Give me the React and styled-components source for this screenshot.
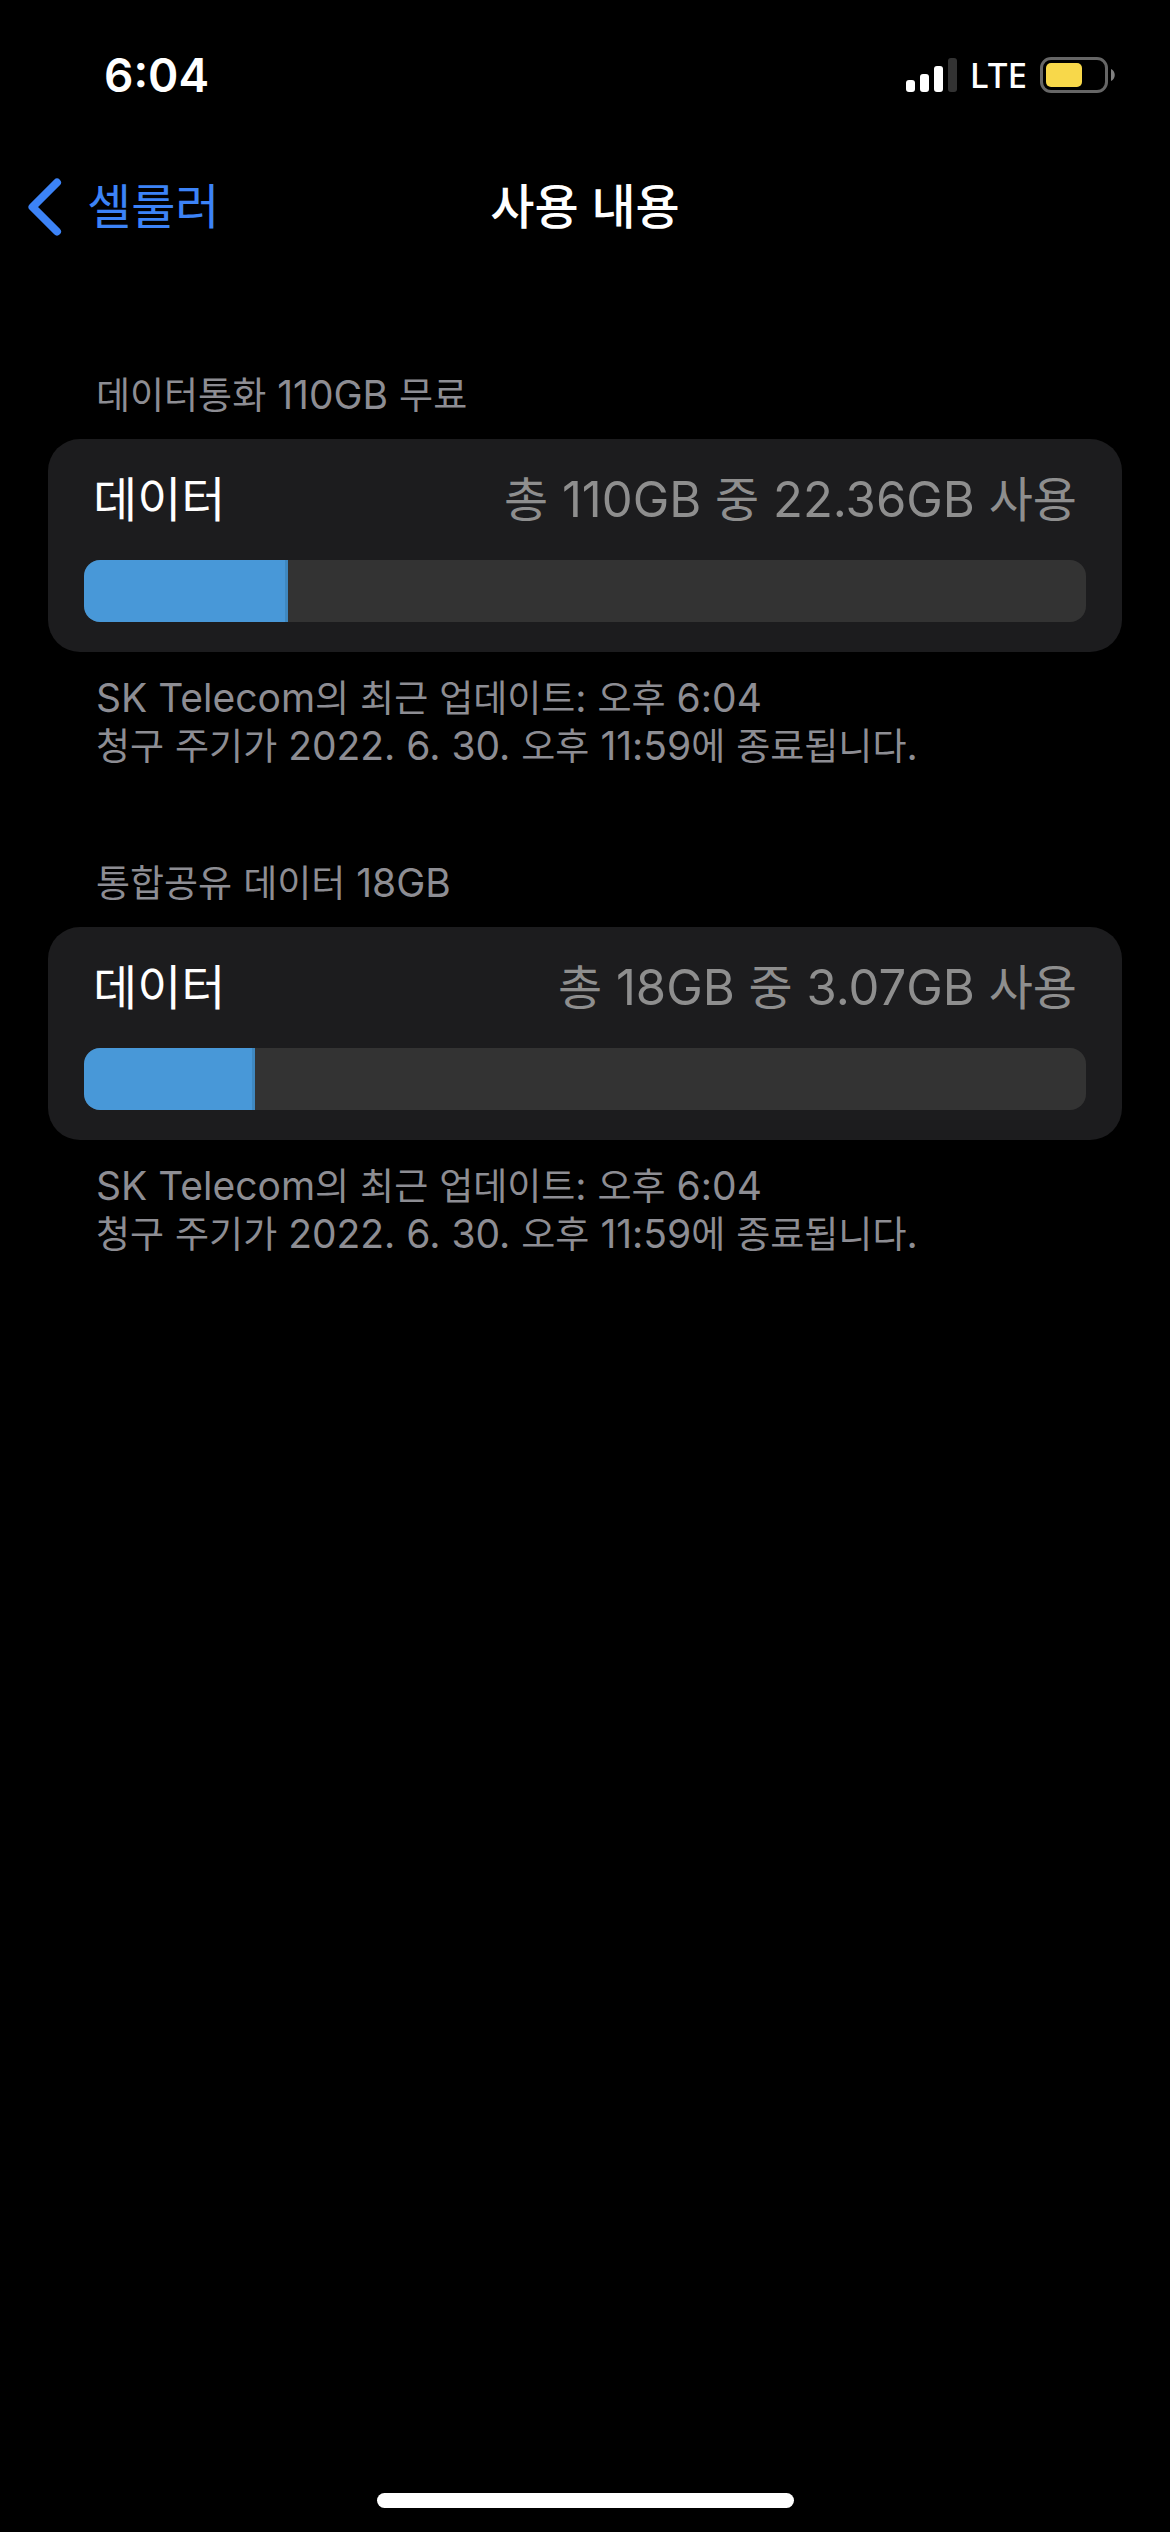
import React from "react";
import styled, { createGlobalStyle } from "styled-components";

const GlobalStyle = createGlobalStyle`
  *, *::before, *::after { box-sizing: border-box; }
  body {
    margin: 0;
    background: #000;
    color: #fff;
    font-family: Inter, "Noto Sans CJK KR", sans-serif;
  }
  h1, h2, h3, p { margin: 0; font-weight: 400; }
`;

const Screen = styled.div`
  display: flex;
  flex-direction: column;
  min-height: 100vh;
`;

const StatusBar = styled.header`
  display: flex;
  align-items: center;
  justify-content: space-between;
  height: 141px;
  padding: 8px 54px 0 104px;
`;

const Clock = styled.time`
  font-size: 46px;
  line-height: 48px;
  font-weight: 600;
`;

const StatusIcons = styled.div`
  display: flex;
  align-items: center;
  gap: 13px;
`;

const Network = styled.span`
  font-family: "Noto Sans", sans-serif;
  font-size: 35px;
  line-height: 48px;
  font-weight: 500;
`;

const NavBar = styled.nav`
  display: grid;
  grid-template-columns: 1fr auto 1fr;
  align-items: center;
  height: 132px;
  padding: 0 28px;
`;

const BackButton = styled.button`
  display: flex;
  align-items: center;
  gap: 25px;
  justify-self: start;
  padding: 0;
  border: 0;
  background: none;
  color: #3c83f7;
  font: inherit;
  font-size: 48px;
  line-height: 62px;
  cursor: pointer;
`;

const Title = styled.h1`
  font-size: 48px;
  line-height: 62px;
  font-weight: 500;
`;

const Content = styled.main`
  display: flex;
  flex-direction: column;
  flex: 1;
  gap: 89px;
  padding: 99px 48px 0;
`;

/* Latin letters and digits are set a little larger than the Hangul beside them. */
const Latin = styled.span`
  line-height: 1;
`;

const Caption = styled.h2`
  padding: 0 48px 19px;
  color: #8d8d93;
  font-size: 37px;
  line-height: 48px;

  ${Latin} {
    font-size: 39px;
  }
`;

const Card = styled.div`
  padding: 30px 36px;
  border-radius: 32px;
  background: #1c1c1e;
`;

const Row = styled.div`
  display: flex;
  justify-content: space-between;
  padding: 0 9px 29px;
  font-size: 48px;
  line-height: 62px;

  ${Latin} {
    font-size: 49px;
  }
`;

const Amount = styled.span`
  color: #8e8e8e;
`;

const Track = styled.div`
  height: 62px;
  border-radius: 16px;
  overflow: hidden;
  background: #333;
`;

const Fill = styled.div`
  height: 100%;
  border-right: 3px solid #3f88c0;
  background: #4898d8;
`;

const Footnote = styled.div`
  padding: 23px 48px 0;
  color: #8d8d93;
  font-size: 37px;
  line-height: 48px;

  ${Latin} {
    font-size: 39px;
  }
`;

const HomeArea = styled.footer`
  display: flex;
  justify-content: center;
  padding-bottom: 24px;
`;

const HomeIndicator = styled.div`
  width: 417px;
  height: 15px;
  border-radius: 8px;
  background: #fff;
`;

const plans = [
  { name: "데이터통화 110GB 무료", total: 110, used: 22.36 },
  { name: "통합공유 데이터 18GB", total: 18, used: 3.07 },
];

function MixedText({ children }) {
  return children
    .split(/([\x20-\x7e]+)/)
    .filter(Boolean)
    .map((run, i) => (/^[\x20-\x7e]/.test(run) ? <Latin key={i}>{run}</Latin> : run));
}

function SignalIcon() {
  return (
    <svg width="51" height="34" viewBox="0 0 51 34" fill="#fff" aria-hidden="true">
      <rect x="0" y="22" width="9" height="12" rx="3" />
      <rect x="14" y="16" width="9" height="18" rx="3" />
      <rect x="28" y="8" width="9" height="26" rx="3" />
      <rect x="42" y="0" width="9" height="34" rx="3" fill="#333" />
    </svg>
  );
}

function BatteryIcon() {
  return (
    <svg width="76" height="36" viewBox="0 0 76 36" aria-hidden="true">
      <rect x="1.5" y="1.5" width="65" height="33" rx="9.5" fill="none" stroke="#666" strokeWidth="3" />
      <rect x="6" y="6" width="36" height="24" rx="5" fill="#f8d84a" />
      <path d="M71 12 C76 14 76 22 71 24 Z" fill="#808080" />
    </svg>
  );
}

function BackIcon() {
  return (
    <svg width="34" height="58" viewBox="0 0 34 58" aria-hidden="true">
      <path
        d="M29 4.5 L4.5 29 L29 53.5"
        fill="none"
        stroke="currentColor"
        strokeWidth="8"
        strokeLinecap="round"
        strokeLinejoin="round"
      />
    </svg>
  );
}

function Plan({ name, total, used }) {
  return (
    <section>
      <Caption>
        <MixedText>{name}</MixedText>
      </Caption>
      <Card>
        <Row>
          <span>데이터</span>
          <Amount>
            <MixedText>{`총 ${total}GB 중 ${used}GB 사용`}</MixedText>
          </Amount>
        </Row>
        <Track role="progressbar" aria-label={name} aria-valuemin={0} aria-valuemax={total} aria-valuenow={used}>
          <Fill style={{ width: `${(used / total) * 100}%` }} />
        </Track>
      </Card>
      <Footnote>
        <p>
          <MixedText>SK Telecom의 최근 업데이트: 오후 6:04</MixedText>
        </p>
        <p>
          <MixedText>청구 주기가 2022. 6. 30. 오후 11:59에 종료됩니다.</MixedText>
        </p>
      </Footnote>
    </section>
  );
}

export default function App() {
  return (
    <>
      <GlobalStyle />
      <Screen>
        <StatusBar>
          <Clock>6:04</Clock>
          <StatusIcons>
            <SignalIcon />
            <Network>LTE</Network>
            <BatteryIcon />
          </StatusIcons>
        </StatusBar>
        <NavBar>
          <BackButton type="button">
            <BackIcon />
            셀룰러
          </BackButton>
          <Title>사용 내용</Title>
        </NavBar>
        <Content>
          {plans.map((plan) => (
            <Plan key={plan.name} {...plan} />
          ))}
        </Content>
        <HomeArea>
          <HomeIndicator />
        </HomeArea>
      </Screen>
    </>
  );
}
